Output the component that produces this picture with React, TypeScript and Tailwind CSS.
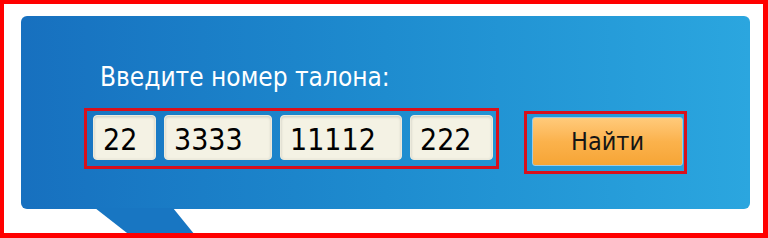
const parts = [
  { value: "22", width: "w-[63px]" },
  { value: "3333", width: "w-[108px]" },
  { value: "11112", width: "w-[122px]" },
  { value: "222", width: "w-[83px]" },
];

export default function App() {
  return (
    <div className="w-[768px] h-[238px] overflow-hidden border-[#f00] border-t-[4px] border-l-[4px] border-r-[5px] border-b-[5px] bg-white pl-[17px] pt-[12px] font-['DejaVu_Sans_Condensed','Liberation_Sans',sans-serif]">
      <div className="relative w-[729px] h-[193px] rounded-[6px] bg-gradient-to-r from-[#1770bf] via-[#1e8ccf] to-[#2ba6df] pl-[63px] pt-[46px]">
        {/* tail of the speech bubble */}
        <svg className="absolute left-[74px] top-[192px]" width="110" height="40" viewBox="0 0 110 40">
          <polygon points="0,0 78,0 104,32 41,32" fill="#1876c2" />
        </svg>

        <h2 className="ml-[16px] text-[26px] leading-[30px] text-white">Введите номер талона:</h2>

        <div className="mt-[16px] flex items-start gap-[25px]">
          <div className="flex gap-[8px] border-[3px] border-[#d8101c] pl-[6px] pr-[3px] pt-[4px] pb-[6px]">
            {parts.map((p) => (
              <div
                key={p.value}
                className={`${p.width} h-[45px] rounded-[4px] border border-[#eceadc] bg-[#f4f2e4] pl-[9px] text-[30px] leading-[48px] text-black shadow-[inset_0_1px_3px_rgba(0,0,0,0.18)]`}
              >
                {p.value}
              </div>
            ))}
          </div>

          <div className="mt-[3px] border-[3px] border-[#d8101c] pl-[5px] pr-[1px] pt-[3px] pb-[5px]">
            <button className="flex h-[49px] w-[151px] items-center justify-center rounded-[3px] border border-[#9ccbe6] bg-gradient-to-b from-[#ffca7a] via-[#fbb24c] to-[#f6a535] text-[25px] text-[#151515]">
              Найти
            </button>
          </div>
        </div>
      </div>
    </div>
  );
}
